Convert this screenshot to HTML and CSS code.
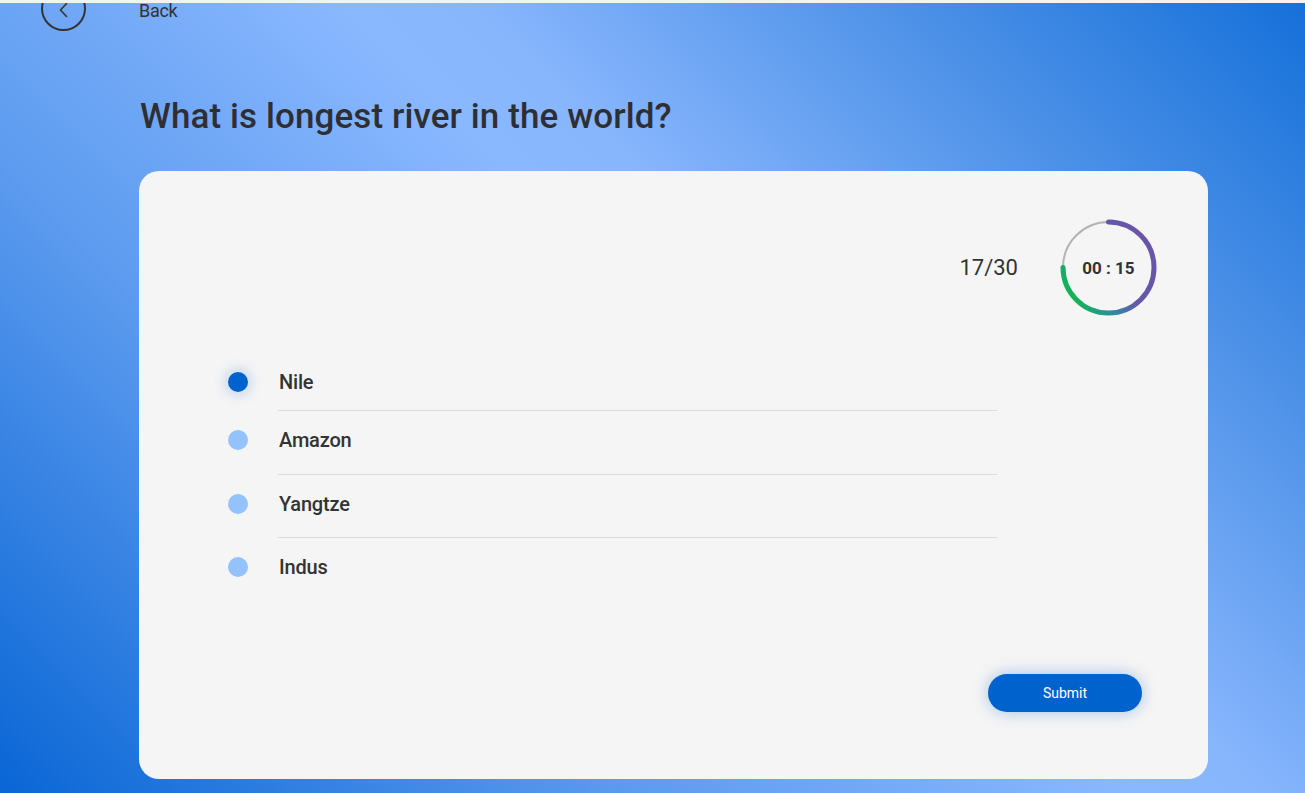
FILE: index.html
```html
<!DOCTYPE html>
<html lang="en">
<head>
<meta charset="utf-8">
<title>Quiz</title>
<link rel="stylesheet" href="styles.css">
</head>
<body>
<div class="topline"></div>
<div class="page">
  <header class="header">
    <button class="back-btn" aria-label="Back">
      <svg width="12" height="16" viewBox="0 0 12 16"><path d="M8.5 1.5 L2.5 8 L8.5 14.5" fill="none" stroke="#333" stroke-width="1.6" stroke-linecap="round" stroke-linejoin="round"/></svg>
    </button>
    <span class="back-text">Back</span>
  </header>
  <main class="content">
    <h1 class="title">What is longest river in the world?</h1>
    <section class="card">
      <div class="card-top">
        <span class="counter">17/30</span>
        <div class="timer">
          <svg width="97" height="97" viewBox="0 0 97 97">
            <defs>
              <linearGradient id="arcGrad" x1="0.9" y1="0.2" x2="0.05" y2="0.75">
                <stop offset="0" stop-color="#6a54a8"/>
                <stop offset="0.45" stop-color="#6459a8"/>
                <stop offset="0.72" stop-color="#2d8ca3"/>
                <stop offset="1" stop-color="#13b454"/>
              </linearGradient>
            </defs>
            <circle cx="48.5" cy="48.5" r="45.5" fill="none" stroke="#b3b3b3" stroke-width="2"/>
            <path d="M48.5 3 A45.5 45.5 0 1 1 3 48.5" fill="none" stroke="url(#arcGrad)" stroke-width="5" stroke-linecap="round"/>
          </svg>
          <span class="timer-text">00 : 15</span>
        </div>
      </div>
      <ul class="options">
        <li class="option first selected"><span class="dot"></span><span class="label">Nile</span></li>
        <li class="divider"></li>
        <li class="option second"><span class="dot"></span><span class="label">Amazon</span></li>
        <li class="divider"></li>
        <li class="option"><span class="dot"></span><span class="label">Yangtze</span></li>
        <li class="divider"></li>
        <li class="option"><span class="dot"></span><span class="label">Indus</span></li>
      </ul>
      <div class="actions">
        <button class="submit">Submit</button>
      </div>
    </section>
  </main>
</div>
</body>
</html>
```
FILE: styles.css
```css
html, body {
  margin: 0;
  padding: 0;
}
body {
  width: 1305px;
  height: 793px;
  overflow: hidden;
  font-family: Roboto, "Noto Sans", sans-serif;
  color: #333;
  background: linear-gradient(45deg, #0966d5 0%, #5c9bef 30%, #8ab8ff 54%, #88b6fd 60%, #4e92e8 80%, #1570d9 100%);
}
.topline {
  height: 3px;
  background: #f3f3f3;
  position: relative;
  z-index: 2;
}
.header {
  display: flex;
  align-items: flex-start;
  padding-left: 41px;
  padding-top: 1px;
  gap: 53px;
  height: 29px;
}
.back-btn {
  width: 45px;
  height: 45px;
  margin-top: -18px;
  box-sizing: border-box;
  border: 2px solid #333;
  border-radius: 50%;
  background: transparent;
  padding: 0;
  display: flex;
  align-items: center;
  justify-content: center;
  padding-top: 2px;
  flex: none;
}
.back-text {
  font-size: 18px;
  line-height: 14px;
  color: #333;
  letter-spacing: -0.3px;
}
.content {
  padding: 0 97px 0 139px;
}
.title {
  margin: 64px 0 34px 1px;
  font-size: 35px;
  line-height: 40px;
  font-weight: 500;
  color: #2f2f33;
  letter-spacing: 0.1px;
}
.card {
  background: #f5f5f5;
  border-radius: 20px;
  height: 608px;
  box-sizing: border-box;
  padding: 48px 51px 0 89px;
}
.card-top {
  display: flex;
  justify-content: flex-end;
  align-items: center;
  gap: 42px;
  height: 97px;
}
.counter {
  font-size: 22px;
  font-weight: 400;
  color: #333;
}
.timer {
  position: relative;
  width: 97px;
  height: 97px;
}
.timer svg {
  display: block;
}
.timer-text {
  position: absolute;
  inset: 0;
  display: flex;
  align-items: center;
  justify-content: center;
  font-size: 17px;
  font-weight: 700;
  color: #333;
}
.options {
  list-style: none;
  margin: 32px 0 0 0;
  padding: 0;
  width: 769px;
}
.option {
  display: flex;
  align-items: center;
  height: 62px;
  box-sizing: border-box;
  padding-bottom: 4px;
}
.option.first {
  padding-top: 10px;
}
.option.second {
  height: 63px;
  padding-bottom: 5px;
}
.dot {
  width: 20px;
  height: 20px;
  border-radius: 50%;
  background: #94c2fb;
  margin-right: 31px;
  flex: none;
}
.option.selected .dot {
  background: #0062cc;
  box-shadow: 0 0 12px 4px rgba(0, 98, 204, 0.18);
}
.label {
  font-size: 20px;
  font-weight: 500;
  color: #333;
  letter-spacing: -0.2px;
}
.divider {
  height: 1px;
  background: #dadada;
  margin-left: 50px;
  width: 719px;
}
.actions {
  display: flex;
  justify-content: flex-end;
  margin-top: 74px;
  padding-right: 15px;
}
.submit {
  width: 154px;
  height: 38px;
  border: none;
  border-radius: 19px;
  background: #0062cc;
  color: #fff;
  font-family: Roboto, "Noto Sans", sans-serif;
  font-size: 14px;
  box-shadow: 0 0 16px rgba(0, 98, 204, 0.35);
}
```
